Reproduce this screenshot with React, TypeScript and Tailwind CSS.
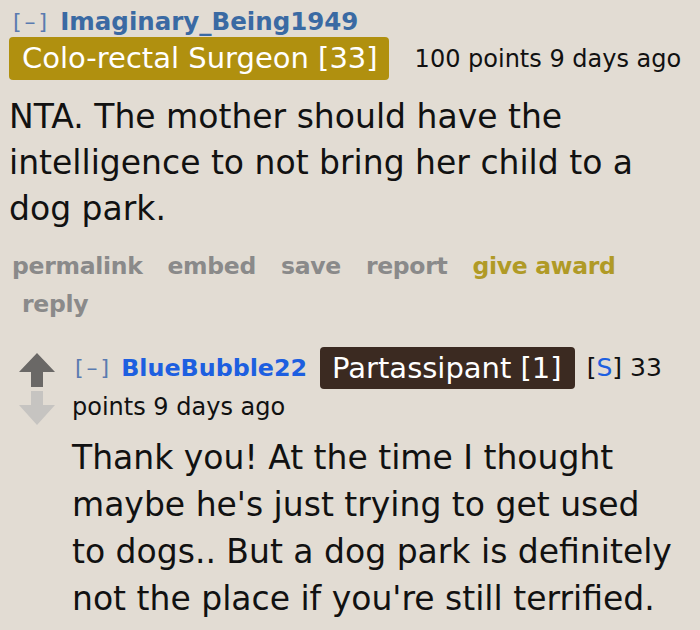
import React from 'react';

// Two reddit comments (old.reddit style) on a beige background.

const FONT = { fontFamily: '"DejaVu Sans", Verdana, sans-serif' };

function VoteArrow({ down }: { down?: boolean }) {
  return (
    <svg width="38" height="34" viewBox="0 0 38 34" aria-hidden="true">
      <path
        d={down ? 'M13 0 H25 V14 H37 L19 34 L1 14 H13 Z' : 'M19 0 L37 19 H25 V34 H13 V19 H1 Z'}
        fill={down ? '#c6c4c1' : '#6a6866'}
      />
    </svg>
  );
}

export default function App() {
  return (
    <div className="w-[700px] h-[630px] bg-[#e2dcd3] overflow-hidden text-black" style={FONT}>
      {/* Parent comment */}
      <div className="pl-[9px] pt-[8px]">
        <div className="flex items-center text-[22px] leading-[28px]">
          <span className="text-[#5a7bb0] ml-[4px] tracking-[3px]">[–]</span>
          <span className="ml-[10px] font-bold text-[24.5px] text-[#3a6aa3]">Imaginary_Being1949</span>
        </div>
        <div className="flex items-center mt-[1px]">
          <span className="bg-[#b0900f] text-white rounded-[4px] text-[29px] leading-[43px] pl-[13px] pr-[11px]">
            Colo-rectal Surgeon [33]
          </span>
          <span className="ml-[26px] text-[24px] text-[#111]">100 points 9 days ago</span>
        </div>
        <p className="mt-[14px] text-[33px] leading-[46px] text-[#111] w-[681px]">
          NTA. The mother should have the intelligence to not bring her child to a dog park.
        </p>
        <div className="mt-[15px] flex flex-wrap gap-x-[25px] text-[23.5px] leading-[38px] font-bold tracking-[-0.3px] text-[#8a8a8a] w-[670px] pl-[3px]">
          <span>permalink</span>
          <span>embed</span>
          <span>save</span>
          <span>report</span>
          <span className="text-[#b09a26]">give award</span>
          <span className="pl-[10px]">reply</span>
        </div>
      </div>

      {/* Reply */}
      <div className="flex mt-[24px] pl-[18px]">
        <div className="flex flex-col gap-[4px] pt-[6px] w-[54px]">
          <VoteArrow />
          <VoteArrow down />
        </div>
        <div className="flex-1">
          <div className="flex items-center text-[22px] leading-[42px]">
            <span className="text-[#5a7bb0] ml-[3px] tracking-[3px]">[–]</span>
            <span className="ml-[9px] font-bold text-[23.8px] text-[#1d5fe0]">BlueBubble22</span>
            <span className="ml-[13px] bg-[#3b2a21] text-white rounded-[4px] text-[29px] leading-[42px] pl-[12px] pr-[13px]">
              Partassipant [1]
            </span>
            <span className="ml-[12px] text-[25px] text-[#111]">
              [<span className="text-[#1d5fe0]">S</span>] 33
            </span>
          </div>
          <div className="mt-[2px] text-[24px] leading-[32px] text-[#111]">points 9 days ago</div>
          <p className="mt-[11px] text-[33px] leading-[47px] text-[#111] whitespace-nowrap">
            Thank you! At the time I thought
            <br />
            maybe he's just trying to get used
            <br />
            to dogs.. But a dog park is definitely
            <br />
            not the place if you're still terrified.
          </p>
        </div>
      </div>
    </div>
  );
}
